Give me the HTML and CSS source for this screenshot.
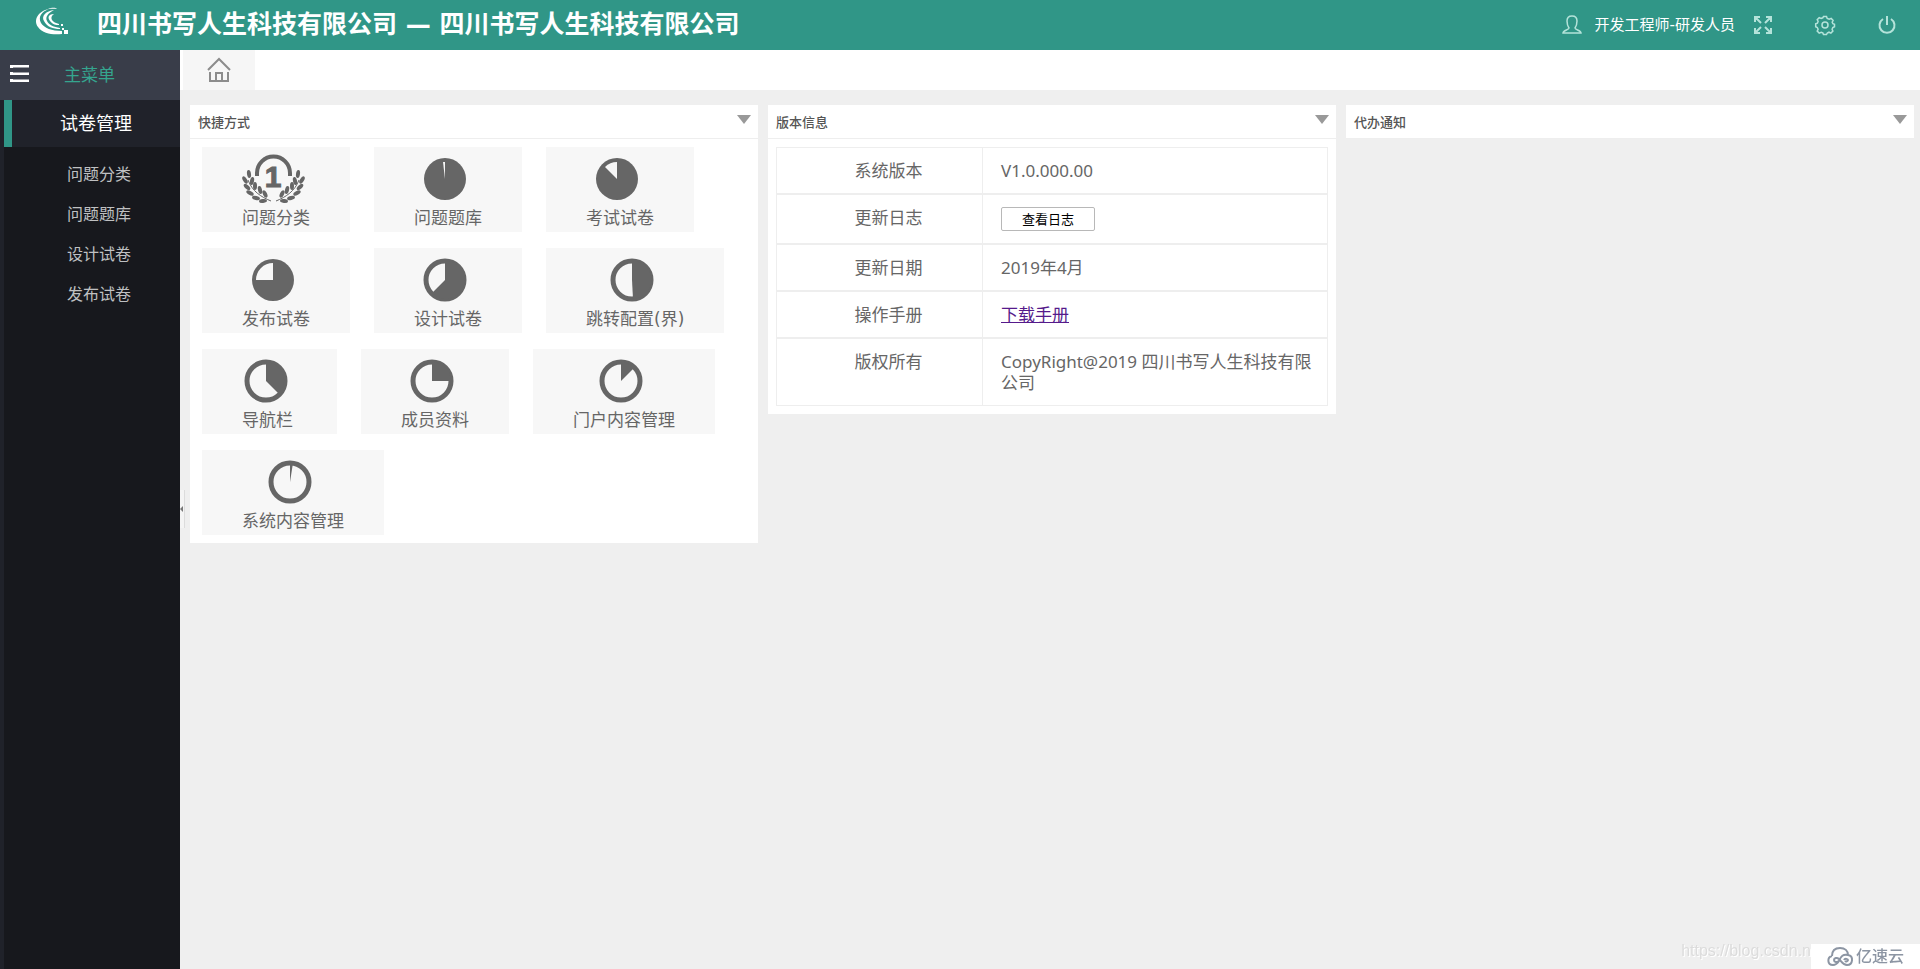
FILE: index.html
```html
<!DOCTYPE html>
<html lang="zh-CN">
<head>
<meta charset="utf-8">
<title>四川书写人生科技有限公司</title>
<link rel="stylesheet" href="styles.css">
</head>
<body>
<svg class="defs" aria-hidden="true">
  <defs>
    <g id="laurel">
      <path d="M22 54C12 50 3 44-1 33" fill="none" stroke="currentColor" stroke-width="1"/>
      <g fill="currentColor">
        <ellipse cx="0" cy="27" rx="2" ry="4" transform="rotate(-8 0 27)"/>
        <ellipse cx="-4" cy="33" rx="2" ry="4" transform="rotate(-32 -4 33)"/>
        <ellipse cx="3" cy="34" rx="2" ry="4" transform="rotate(12 3 34)"/>
        <ellipse cx="-2" cy="40" rx="2" ry="4" transform="rotate(-48 -2 40)"/>
        <ellipse cx="6" cy="39" rx="2" ry="4" transform="rotate(0 6 39)"/>
        <ellipse cx="1" cy="46" rx="2" ry="4" transform="rotate(-62 1 46)"/>
        <ellipse cx="11" cy="43" rx="2" ry="4" transform="rotate(-14 11 43)"/>
        <ellipse cx="7" cy="51" rx="2" ry="4" transform="rotate(-76 7 51)"/>
        <ellipse cx="16" cy="47" rx="2" ry="4" transform="rotate(-26 16 47)"/>
        <ellipse cx="14" cy="54" rx="2" ry="4" transform="rotate(-96 14 54)"/>
      </g>
    </g>
    <circle id="ring" cx="24" cy="32" r="19" fill="none" stroke="currentColor" stroke-width="5"/>
  </defs>
</svg>

<header class="topbar">
  <svg class="logo" viewBox="0 0 36 28" fill="#fff" aria-hidden="true">
    <path d="M14 1C3 3-2 12 3 19c5 7 15 8 24 7v-3C17 23 9 20 6 15 3 9 6 4 14 1Z"/>
    <path d="M19 2C11 3 6 8 9 13c3 6 9 8 16 8v-1c-6-1-11-3-13-7s1-8 7-11Z"/>
    <path d="M19 6c-5 0-7 3-4 7s6 4 9 4v-1c-3-1-6-2-7-4s-1-4 2-6Z"/>
    <path d="M13 1C18-1 21 0 22 1c-2-.5-5-.5-9 0ZM26 16h2v2h-2zM27 20h2v2h-2zM29 22h4v4h-4z"/>
  </svg>
  <h1 class="brand">四川书写人生科技有限公司 — 四川书写人生科技有限公司</h1>
  <nav class="tools" aria-label="用户">
    <a class="user" href="#">
      <svg class="ico" viewBox="0 0 20 20"><path d="M7 13c-2-3-2-4-2-7 0-3 2-5 5-5s5 2 5 5c0 3 0 4-2 7 0 2 6 2 6 5H1c0-3 6-3 6-5Z"/></svg>
      <span>开发工程师-研发人员</span>
    </a>
    <button class="tool" type="button" aria-label="全屏"><svg class="ico" viewBox="0 0 20 20"><path stroke-width="2" d="M2 7V2h5M13 2h5v5M18 13v5h-5M7 18H2v-5M2 2l6 6M18 2l-6 6M18 18l-6-6M2 18l6-6"/></svg></button>
    <button class="tool" type="button" aria-label="设置"><svg class="ico" viewBox="0 0 20 20"><circle cx="10" cy="10" r="3"/><path d="M8.500 1.500h3l.7 2 2 .8 2-.9 1.900 2-.9 1.900.7 1.400 1.600.6v2.500l-1.700.8-.7 1.600.8 1.900-2 2-1.900-.9-1.700.8-.8 1.600h-3l-.7-1.700-1.600-.7-2 .9-2-2 .9-1.900-.8-1.700-1.600-.7V8.800l1.700-.7.7-1.600-.9-1.900 2-2 1.900.9 1.700-.7Z"/></svg></button>
    <button class="tool" type="button" aria-label="退出"><svg class="ico" viewBox="0 0 20 20"><path stroke-width="2" d="M6 4a7.500 7.500 0 1 0 8 0M10 1v9"/></svg></button>
  </nav>
</header>

<div class="shell">
  <aside class="sidebar">
    <div class="menu-head">
      <button class="burger" type="button" aria-label="折叠菜单"><svg viewBox="0 0 20 18" fill="#fff"><path d="M0 0h3v3H0zM3 0h16v2.500H3zM0 7h3v3H0zM3 7.500h16V10H3zM0 14h3v3H0zM3 14.500h16V17H3z"/></svg></button>
      <span>主菜单</span>
    </div>
    <nav class="menu" aria-label="主菜单">
      <a class="group" href="#">试卷管理</a>
      <ul class="sub">
        <li><a href="#">问题分类</a></li>
        <li><a href="#">问题题库</a></li>
        <li><a href="#">设计试卷</a></li>
        <li><a href="#">发布试卷</a></li>
      </ul>
    </nav>
    <button class="handle" type="button" aria-label="收起侧栏"></button>
  </aside>

  <main class="main">
    <div class="tabs">
      <a class="tab" href="#" aria-label="首页"><svg viewBox="0 0 24 24" fill="none" stroke="#8c8c8c" stroke-width="2"><path d="M1 12 12 1l11 11M3 14v9h18v-9M9 23v-8h6v8"/></svg></a>
    </div>
    <div class="panels">
      <section class="panel">
        <div class="panel-head"><h2>快捷方式</h2><button class="caret" type="button" aria-label="折叠"></button></div>
        <div class="tiles">
          <a class="tile" href="#"><svg viewBox="0 0 55 59"><path d="M8 29V26a16 16 0 0 1 33 0V29" fill="none" stroke="currentColor" stroke-width="4"/><text class="medal" x="24" y="40" text-anchor="middle">1</text><use href="#laurel"/><use href="#laurel" transform="translate(49 0) scale(-1 1)"/></svg><span>问题分类</span></a>
          <a class="tile" href="#"><svg viewBox="0 0 55 59"><circle cx="24" cy="32" r="21" fill="currentColor"/><path d="M24 32V15h-2Z" fill="#f7f7f7"/></svg><span>问题题库</span></a>
          <a class="tile" href="#"><svg viewBox="0 0 55 59"><circle cx="24" cy="32" r="21" fill="currentColor"/><path d="M24 32V15a17 17 0 0 0-12 5Z" fill="#f7f7f7"/></svg><span>考试试卷</span></a>
          <a class="tile" href="#"><svg viewBox="0 0 55 59"><circle cx="24" cy="32" r="21" fill="currentColor"/><path d="M24 32V15A17 17 0 0 0 7 32Z" fill="#f7f7f7"/></svg><span>发布试卷</span></a>
          <a class="tile" href="#"><svg viewBox="0 0 55 59"><use href="#ring"/><path d="M24 32V13a19 19 0 1 1-13 32Z" fill="currentColor"/></svg><span>设计试卷</span></a>
          <a class="tile" href="#"><svg viewBox="0 0 55 59"><use href="#ring"/><path d="M24 32V13a19 19 0 0 1 1 38Z" fill="currentColor"/></svg><span>跳转配置(界)</span></a>
          <a class="tile" href="#"><svg viewBox="0 0 55 59"><use href="#ring"/><path d="M24 32V13a19 19 0 0 1 13 32Z" fill="currentColor"/></svg><span>导航栏</span></a>
          <a class="tile" href="#"><svg viewBox="0 0 55 59"><use href="#ring"/><path d="M24 32V13a19 19 0 0 1 19 19Z" fill="currentColor"/></svg><span>成员资料</span></a>
          <a class="tile" href="#"><svg viewBox="0 0 55 59"><use href="#ring"/><path d="M24 32V13a19 19 0 0 1 13 6Z" fill="currentColor"/></svg><span>门户内容管理</span></a>
          <a class="tile" href="#"><svg viewBox="0 0 55 59"><use href="#ring"/><path d="M24 32V13h3Z" fill="currentColor"/></svg><span>系统内容管理</span></a>
        </div>
      </section>

      <section class="panel">
        <div class="panel-head"><h2>版本信息</h2><button class="caret" type="button" aria-label="折叠"></button></div>
        <div class="panel-body">
          <table class="info">
            <tr><th scope="row">系统版本</th><td>V1.0.000.00</td></tr>
            <tr><th scope="row">更新日志</th><td><button class="log" type="button">查看日志</button></td></tr>
            <tr><th scope="row">更新日期</th><td>2019年4月</td></tr>
            <tr><th scope="row">操作手册</th><td><a href="#">下载手册</a></td></tr>
            <tr><th scope="row">版权所有</th><td>CopyRight@2019 四川书写人生科技有限公司</td></tr>
          </table>
        </div>
      </section>

      <section class="panel">
        <div class="panel-head"><h2>代办通知</h2><button class="caret" type="button" aria-label="折叠"></button></div>
      </section>
    </div>
  </main>
</div>

<div class="mark">
  <span class="mark-url">https://blog.csdn.n</span>
  <span class="mark-brand"><svg viewBox="0 0 26 20" fill="none" stroke="currentColor" stroke-width="2"><path d="M5 9C5 4 8 1 13 1s8 3 8 7c6 1 5 10-1 10-4 0-5-3-8-6-2-2-5-1-5 1s3 3 5 1M21 8c-5-1-7 1-9 6-2 3-3 4-6 4-6 0-6-8-1-9M17 13c1-2 4-1 4 0s-2 2-3 1"/></svg>亿速云</span>
</div>
</body>
</html>
```

FILE: styles.css
```css
* { box-sizing: border-box; }

body {
  margin: 0;
  min-height: 100vh;
  display: flex;
  flex-direction: column;
  background: #efefef;
  color: #666;
  font-family: "Noto Sans", "Noto Sans CJK SC", sans-serif;
  font-size: 17px;
  line-height: 21px;
}

a { color: inherit; text-decoration: none; }
button { padding: 0; border: 0; background: none; font: inherit; cursor: pointer; }
svg { display: block; overflow: visible; }
.defs { position: absolute; width: 0; height: 0; }

.topbar {
  display: flex;
  align-items: center;
  height: 50px;
  padding: 0 23px 0 35px;
  background: #309687;
  color: #fff;
}
.logo { width: 36px; height: 28px; margin-bottom: 6px; }
.brand {
  margin: 0 auto 0 26px;
  font-family: "DejaVu Sans", "Noto Sans CJK SC", sans-serif;
  font-size: 25px;
  line-height: 50px;
  font-weight: 700;
}
.tools { display: flex; align-items: center; }
.user {
  display: flex;
  align-items: center;
  gap: 13px;
  margin-right: 18px;
  font-family: "DejaVu Sans", "Noto Sans CJK SC", sans-serif;
  font-size: 15px;
}
.ico {
  width: 20px;
  height: 20px;
  fill: none;
  stroke: #b4e3da;
  stroke-width: 1.5;
}
.tool + .tool { margin-left: 42px; }

.shell { flex: 1; display: flex; }

.sidebar {
  position: relative;
  flex: none;
  width: 180px;
  border-left: 4px solid #20222a;
  background: #17181d;
}
.menu-head {
  display: flex;
  align-items: center;
  gap: 34px;
  height: 50px;
  margin-left: -4px;
  padding: 0 0 2px 10px;
  background: #393d49;
  color: #35a58f;
}
.burger svg { width: 20px; height: 18px; }
.group {
  display: block;
  border-left: 8px solid #309687;
  padding-left: 48px;
  background: #20222a;
  color: #fff;
  font-size: 18px;
  line-height: 47px;
}
.sub { margin: 0; padding: 7px 0 0 63px; list-style: none; }
.sub a { display: block; color: #bfc0c2; font-size: 16px; line-height: 40px; }

.handle {
  position: absolute;
  left: 100%;
  top: 440px;
  width: 5px;
  height: 38px;
  border-right: 1px solid #dcdcdc;
  background: #f4f4f4;
}
.handle::before {
  content: "";
  display: block;
  width: 0;
  border: 3px solid transparent;
  border-left: 0;
  border-right-color: #777;
}

.main { flex: 1; min-width: 0; }
.tabs { height: 40px; padding-left: 3px; background: #fff; }
.tab {
  display: flex;
  align-items: center;
  justify-content: center;
  width: 72px;
  height: 40px;
  background: #f6f6f6;
}
.tab svg { width: 24px; height: 24px; }

.panels {
  display: grid;
  grid-template-columns: repeat(3, minmax(0, 1fr));
  align-items: start;
  gap: 10px;
  padding: 15px 6px 15px 10px;
}
.panel { background: #fff; }
.panel-head {
  display: flex;
  align-items: center;
  justify-content: space-between;
  height: 34px;
  padding: 0 7px 0 8px;
  border-bottom: 1px solid #eee;
}
.panel-head h2 { margin: 0; font-size: 13px; line-height: 34px; font-weight: 500; color: #555; }
.caret {
  border: solid transparent;
  border-width: 9px 7px 0;
  border-top-color: #999;
  margin-bottom: 4px;
}

.tiles { display: flex; flex-wrap: wrap; gap: 16px 24px; padding: 8px 12px; }
.tile {
  display: flex;
  flex-direction: column;
  align-items: center;
  height: 85px;
  padding: 0 40px;
  background: #f7f7f7;
  font-family: "DejaVu Sans", "Noto Sans CJK SC", sans-serif;
}
.tile svg { width: 55px; height: 59px; }
.tile span { align-self: flex-start; line-height: 24px; }
.medal {
  font-family: "Liberation Sans", sans-serif;
  font-size: 30px;
  font-weight: 700;
  fill: currentColor;
  stroke: currentColor;
  stroke-width: 1;
}

.panel-body { padding: 8px; }
.info { width: 100%; border-collapse: collapse; border: 1px solid #eee; }
.info tr + tr { border-top: 2px solid #eee; }
.info th, .info td {
  padding: 12px 0 12px 18px;
  vertical-align: top;
  font-weight: 400;
}
.info th { width: 206px; border-right: 1px solid #eee; text-align: center; }
.info td { text-align: left; padding-right: 12px; }
.info a { color: #551a8b; text-decoration: underline; }
.log {
  display: block;
  width: 94px;
  height: 24px;
  border: 1px solid #b8b8b8;
  border-radius: 2px;
  background: #fff;
  color: #000;
  font-size: 13px;
  line-height: 20px;
}

.mark {
  position: fixed;
  right: 0;
  bottom: 0;
  display: flex;
  align-items: flex-end;
}
.mark-url {
  color: #dcdcdc;
  font-family: "Liberation Sans", sans-serif;
  font-size: 16px;
  line-height: 36px;
  text-shadow: 1px 1px 0 #fff;
}
.mark-brand {
  display: flex;
  align-items: center;
  gap: 3px;
  height: 25px;
  padding: 0 16px;
  background: #fff;
  color: #8c95a3;
  font-size: 16px;
  font-weight: 500;
}
.mark-brand svg { width: 26px; height: 20px; }
```
